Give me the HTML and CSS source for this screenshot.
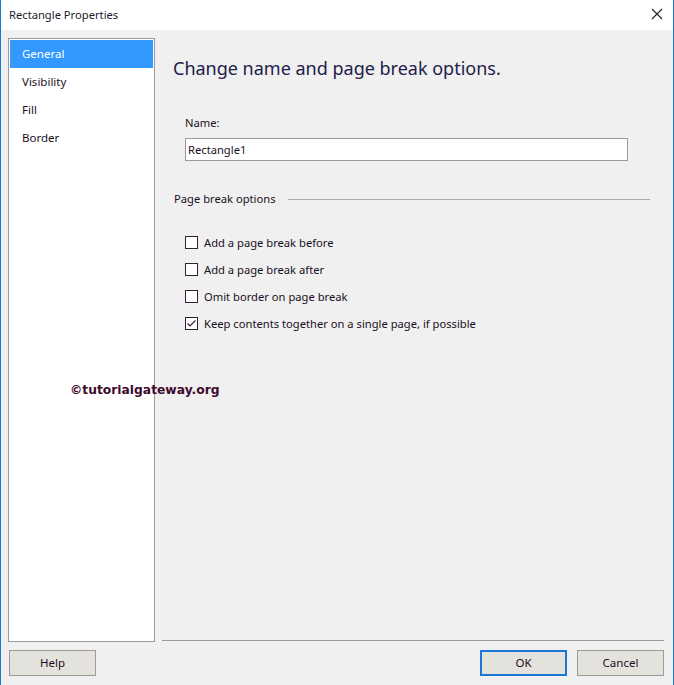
FILE: index.html
```html
<!DOCTYPE html>
<html>
<head>
<meta charset="utf-8">
<link rel="stylesheet" href="styles.css">
</head>
<body>
<div class="window">
  <div class="titlebar">
    <span class="title">Rectangle Properties</span>
    <svg class="close" width="12" height="12" viewBox="0 0 12 12"><path d="M1 1 L11 11 M11 1 L1 11" stroke="#2a1a2a" stroke-width="1.1" fill="none"/></svg>
  </div>
  <div class="main">
    <ul class="nav">
      <li class="nav-item selected">General</li>
      <li class="nav-item">Visibility</li>
      <li class="nav-item">Fill</li>
      <li class="nav-item">Border</li>
    </ul>
    <div class="panel">
      <h1 class="heading">Change name and page break options.</h1>
      <label class="field-label">Name:</label>
      <div class="input">Rectangle1</div>
      <div class="group-header"><span>Page break options</span><span class="rule"></span></div>
      <div class="checks">
        <div class="check-row"><span class="box"></span><span>Add a page break before</span></div>
        <div class="check-row"><span class="box"></span><span>Add a page break after</span></div>
        <div class="check-row"><span class="box"></span><span>Omit border on page break</span></div>
        <div class="check-row"><span class="box"><svg width="11" height="11" viewBox="0 0 11 11"><path d="M1.5 5.5 L4 8 L9.5 2.5" stroke="#3a1a3a" stroke-width="1.1" fill="none"/></svg></span><span>Keep contents together on a single page, if possible</span></div>
      </div>
    </div>
  </div>
  <div class="footer">
    <button class="btn">Help</button>
    <span class="spacer"></span>
    <button class="btn primary">OK</button>
    <button class="btn">Cancel</button>
  </div>
  <div class="watermark">©tutorialgateway.org</div>
</div>
</body>
</html>
```

FILE: styles.css
```css
* { box-sizing: border-box; }
html, body { margin: 0; padding: 0; }
body {
  font-family: "Noto Sans", "Open Sans", sans-serif;
  font-size: 11.2px;
  color: #1a0f24;
}
.window {
  position: relative;
  width: 674px;
  height: 685px;
  background: #f0f0f0;
  border-left: 1px solid #1979ca;
  border-right: 1px solid #1979ca;
  overflow: hidden;
}
.titlebar {
  height: 30px;
  background: #fff;
  display: flex;
  align-items: center;
  justify-content: space-between;
  padding: 0 10px 2px 8px;
}
.title { font-size: 11.2px; color: #1a1a2a; }
.main {
  display: flex;
  padding: 8px 9px 0 7px;
}
.nav {
  list-style: none;
  margin: 0;
  padding: 1px;
  width: 147px;
  height: 604px;
  background: #fff;
  border: 1px solid #a09a94;
}
.nav-item {
  height: 28px;
  line-height: 28px;
  padding-left: 12px;
  font-size: 11.5px;
}
.nav-item.selected { background: #3399ff; color: #fff; }
.panel {
  flex: 1;
  margin-left: 7px;
  height: 603px;
  border-bottom: 1px solid #a09a94;
  padding: 16px 0 0 11px;
  display: flex;
  flex-direction: column;
}
.heading {
  margin: 0;
  font-weight: normal;
  font-size: 18px;
  line-height: 28px;
  color: #22204a;
}
.field-label {
  margin-top: 33px;
  margin-left: 12px;
  line-height: 16px;
}
.input {
  margin-top: 7px;
  margin-left: 12px;
  width: 443px;
  height: 23px;
  border: 1px solid #a09a94;
  background: #fff;
  padding-left: 2px;
  line-height: 21px;
}
.group-header {
  margin-top: 30px;
  margin-right: 14px;
  display: flex;
  align-items: center;
  line-height: 16px;
  margin-left: 1px;
}
.rule {
  flex: 1;
  height: 1px;
  background: #b0aaa4;
  margin-left: 12px;
}
.checks { margin-top: 22px; margin-left: 12px; }
.check-row {
  height: 27px;
  display: flex;
  align-items: center;
}
.box {
  width: 13px;
  height: 13px;
  border: 1px solid #3a1a3a;
  background: #fff;
  margin-right: 6px;
  display: flex;
  align-items: center;
  justify-content: center;
}
.footer {
  display: flex;
  padding: 8px 9px 0 8px;
  gap: 10px;
}
.spacer { flex: 1; }
.btn {
  width: 87px;
  height: 26px;
  font-family: "Noto Sans", "Open Sans", sans-serif;
  font-size: 11.5px;
  color: #1a0f24;
  background: #e4e2dd;
  border: 1px solid #a09a94;
  padding: 0 0 2px;
}
.btn.primary { border: 2px solid #1a78d4; }
.watermark {
  position: absolute;
  left: 69px;
  top: 383px;
  font-family: "DejaVu Sans", sans-serif;
  font-weight: bold;
  font-size: 12.3px;
  color: #3d0a2c;
}
```
